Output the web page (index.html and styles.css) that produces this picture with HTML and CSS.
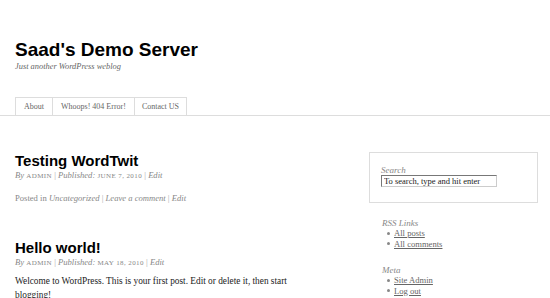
FILE: index.html
```html
<!DOCTYPE html>
<html lang="en">
<head>
  <meta charset="UTF-8" />
  <title>Saad's Demo Server</title>
  <link rel="stylesheet" href="styles.css">
</head>
<body>
  <div id="header">
    <div id="branding">
      <h1 id="blog-title">Saad's Demo Server</h1>
      <div id="blog-description">Just another WordPress weblog</div>
    </div>
    <div id="access">
      <ul class="menu">
        <li class="page-about"><a href="#">About</a></li>
        <li class="page-404"><a href="#">Whoops! 404 Error!</a></li>
        <li class="page-contact"><a href="#">Contact US</a></li>
      </ul>
    </div>
  </div>

  <div id="main">
    <div id="content">
      <div class="post">
        <h2 class="entry-title">Testing WordTwit</h2>
        <div class="entry-meta">
          <em>By</em> <span class="caps">admin</span> <span class="sep">|</span>
          <em>Published:</em> <span class="caps">June 7, 2010</span> <span class="sep">|</span>
          <em>Edit</em>
        </div>
        <div class="entry-utility">
          Posted in <em>Uncategorized</em> <span class="sep">|</span> <em>Leave a comment</em> <span class="sep">|</span> <em>Edit</em>
        </div>
      </div>

      <div class="post">
        <h2 class="entry-title">Hello world!</h2>
        <div class="entry-meta">
          <em>By</em> <span class="caps">admin</span> <span class="sep">|</span>
          <em>Published:</em> <span class="caps">May 18, 2010</span> <span class="sep">|</span>
          <em>Edit</em>
        </div>
        <div class="entry-content">
          <p>Welcome to WordPress. This is your first post. Edit or delete it, then start blogging!</p>
        </div>
      </div>
    </div>

    <div id="sidebar">
      <div class="search-box">
        <label for="s">Search</label>
        <input type="text" id="s" value="To search, type and hit enter">
      </div>

      <div class="widget">
        <h3>RSS Links</h3>
        <ul>
          <li><a href="#">All posts</a></li>
          <li><a href="#">All comments</a></li>
        </ul>
      </div>

      <div class="widget">
        <h3>Meta</h3>
        <ul>
          <li><a href="#">Site Admin</a></li>
          <li><a href="#">Log out</a></li>
        </ul>
      </div>
    </div>
  </div>
</body>
</html>
```

FILE: styles.css
```css
body {
  margin: 0;
  padding: 0;
  background: #fff;
  color: #333;
  font-family: 'Liberation Serif', serif;
  overflow: hidden;
}
#branding {
  padding: 39px 0 0 15px;
}
#blog-title {
  margin: 0;
  font-family: 'Liberation Sans', Arial, sans-serif;
  font-size: 19px;
  line-height: 22px;
  font-weight: bold;
  color: #000;
}
#blog-description {
  margin-top: 1px;
  font-size: 8.4px;
  line-height: 10px;
  font-style: italic;
  color: #666;
}
#access {
  margin-top: 25px;
  border-bottom: 1px solid #ddd;
}
#access .menu {
  list-style: none;
  margin: 0;
  padding: 0 0 0 15px;
  display: flex;
}
#access li {
  border: 1px solid #ddd;
  border-bottom: none;
  border-left: none;
}
#access li:first-child {
  border-left: 1px solid #ddd;
}
#access a {
  display: block;
  padding: 0 8px;
  height: 17px;
  line-height: 18px;
  font-size: 8px;
  color: #666;
  text-decoration: none;
}
#access .page-contact a {
  padding: 0 7px;
}
#main {
  display: flex;
  padding-left: 15px;
}
#content {
  width: 354px;
}
.post {
  padding-top: 37px;
}
.entry-title {
  margin: 0;
  font-family: 'Liberation Sans', Arial, sans-serif;
  font-size: 15px;
  line-height: 16px;
  color: #000;
}
.entry-meta,
.entry-utility {
  font-size: 8.6px;
  line-height: 10px;
  color: #888;
  margin-top: 1px;
}
.entry-utility {
  margin-top: 12px;
}
.caps {
  text-transform: uppercase;
  font-size: 7px;
  letter-spacing: 0.4px;
}
.sep {
  color: #aaa;
}
.entry-content {
  width: 290px;
}
.entry-content p {
  margin: 6px 0 0;
  font-size: 9.3px;
  line-height: 14px;
  color: #222;
}
#sidebar {
  width: 169px;
  padding-top: 36px;
}
.search-box {
  border: 1px solid #ddd;
  padding: 12px 11px 15px;
}
.search-box label {
  display: block;
  font-size: 9px;
  line-height: 10px;
  font-style: italic;
  color: #888;
}
.search-box input {
  display: block;
  margin-top: 0;
  width: 116px;
  height: 12px;
  box-sizing: border-box;
  padding: 0 2px;
  border: 1px solid #ccc;
  border-top-color: #777;
  border-left-color: #777;
  font-family: 'Liberation Serif', serif;
  font-size: 8.5px;
  color: #222;
  outline: none;
}
.widget {
  padding-left: 13px;
  margin-top: 15px;
}
.widget + .widget {
  margin-top: 16px;
}
.widget h3 {
  margin: 0;
  font-size: 9px;
  line-height: 10px;
  font-weight: normal;
  font-style: italic;
  color: #888;
}
.widget ul {
  list-style: none;
  margin: 0;
  padding: 0 0 0 5px;
}
.widget li {
  font-size: 8.6px;
  line-height: 10.5px;
  display: flex;
  align-items: center;
  gap: 4px;
}
.widget li::before {
  content: "";
  width: 3px;
  height: 3px;
  border-radius: 50%;
  background: #888;
}
.widget a {
  color: #666;
}
```
